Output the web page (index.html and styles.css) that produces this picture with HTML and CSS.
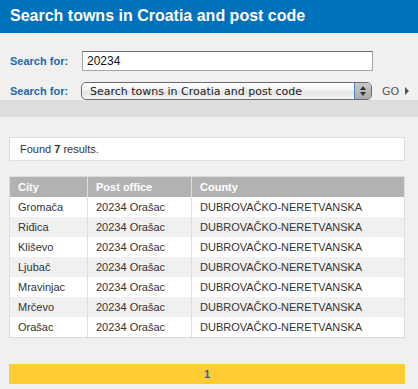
FILE: index.html
```html
<!DOCTYPE html>
<html lang="en">
<head>
  <meta charset="UTF-8">
  <title>Search towns in Croatia and post code</title>
  <link rel="stylesheet" href="styles.css">
</head>
<body>
  <h1 class="naslov">Search towns in Croatia and post code</h1>

  <form class="trazilica" onsubmit="return false">
    <div class="red">
      <label class="oznaka" for="upit">Search for:</label>
      <input id="upit" class="polje" type="text" value="20234">
    </div>
    <div class="red">
      <label class="oznaka" for="vrsta">Search for:</label>
      <div class="izbornik">
        <select id="vrsta" class="odabir">
          <option>Search towns in Croatia and post code</option>
        </select>
        <span class="strelice"><i class="gore"></i><i class="dolje"></i></span>
      </div>
      <a class="kreni" href="#">GO <span class="trokut"></span></a>
    </div>
  </form>
  <div class="traka"></div>

  <div class="sadrzaj">
    <div class="pronadeno">Found <b>7</b> results.</div>

    <table class="rezultati">
      <tr>
        <th class="stupacGrad">City</th>
        <th class="stupacPosta">Post office</th>
        <th>County</th>
      </tr>
      <tr><td>Gromača</td><td>20234 Orašac</td><td>DUBROVAČKO-NERETVANSKA</td></tr>
      <tr><td>Riđica</td><td>20234 Orašac</td><td>DUBROVAČKO-NERETVANSKA</td></tr>
      <tr><td>Kliševo</td><td>20234 Orašac</td><td>DUBROVAČKO-NERETVANSKA</td></tr>
      <tr><td>Ljubač</td><td>20234 Orašac</td><td>DUBROVAČKO-NERETVANSKA</td></tr>
      <tr><td>Mravinjac</td><td>20234 Orašac</td><td>DUBROVAČKO-NERETVANSKA</td></tr>
      <tr><td>Mrčevo</td><td>20234 Orašac</td><td>DUBROVAČKO-NERETVANSKA</td></tr>
      <tr><td>Orašac</td><td>20234 Orašac</td><td>DUBROVAČKO-NERETVANSKA</td></tr>
    </table>

    <div class="stranice"><a href="#">1</a></div>
  </div>
</body>
</html>
```

FILE: styles.css
```css
body {
  margin: 0;
  padding: 0;
  background-color: #f0f0f0;
  color: #333333;
  font-family: "Liberation Sans", Arial, Helvetica, sans-serif;
  font-size: 12px;
}

.naslov {
  margin: 0;
  height: 33px;
  line-height: 32px;
  padding-left: 10px;
  background-color: #0072bc;
  color: #ffffff;
  font-size: 16px;
  font-weight: bold;
}

.trazilica {
  padding: 18px 0 0 10px;
  height: 49px;
}

.red {
  display: flex;
  align-items: center;
  height: 20px;
}
.red + .red {
  margin-top: 11px;
  height: 18px;
}

.oznaka {
  width: 71px;
  color: #1c69a8;
  font-size: 11px;
  font-weight: bold;
}

.polje {
  box-sizing: border-box;
  width: 291px;
  height: 20px;
  margin: 0 0 0 1px;
  padding: 0 4px;
  border: 1px solid #a5a5a5;
  border-top-color: #6f6f6f;
  background-color: #ffffff;
  color: #111111;
  font-family: "Liberation Sans", Arial, sans-serif;
  font-size: 12px;
}

.izbornik {
  position: relative;
  width: 291px;
  height: 18px;
}

.odabir {
  appearance: none;
  -webkit-appearance: none;
  box-sizing: border-box;
  width: 291px;
  height: 18px;
  margin: 0;
  padding: 0 0 0 8px;
  border: 1px solid #6c6c70;
  border-radius: 5px;
  background: linear-gradient(#ffffff, #f3f3f3 45%, #e2e2e2 55%, #f7f7f7);
  color: #1a1a1a;
  font-family: "DejaVu Sans", "Liberation Sans", sans-serif;
  font-size: 11px;
}

.strelice {
  position: absolute;
  top: 1px;
  right: 1px;
  width: 16px;
  height: 16px;
  border-left: 1px solid #4c84c4;
  border-radius: 0 4px 4px 0;
  background: linear-gradient(#c9c9c9, #a9a9a9);
}
.gore, .dolje {
  position: absolute;
  left: 5px;
  width: 0;
  height: 0;
  border-left: 3px solid transparent;
  border-right: 3px solid transparent;
}
.gore {
  top: 3px;
  border-bottom: 4px solid #333333;
}
.dolje {
  top: 9px;
  border-top: 4px solid #333333;
}

.kreni {
  margin-left: 10px;
  color: #555555;
  font-family: "DejaVu Sans", sans-serif;
  font-size: 11px;
  text-decoration: none;
}
.trokut {
  display: inline-block;
  width: 0;
  height: 0;
  margin-left: 2px;
  border-top: 4px solid transparent;
  border-bottom: 4px solid transparent;
  border-left: 4px solid #555555;
}

.traka {
  height: 17px;
  background-color: #dddddd;
}

.sadrzaj {
  width: 396px;
  margin-left: 9px;
  padding-top: 20px;
}

.pronadeno {
  height: 22px;
  line-height: 22px;
  padding-left: 10px;
  border: 1px solid #dedede;
  background-color: #ffffff;
  font-size: 11px;
}

.rezultati {
  width: 100%;
  margin-top: 15px;
  border-collapse: collapse;
  border: 1px solid #dddddd;
  background-color: #ffffff;
  font-size: 11px;
}
.rezultati th {
  height: 20px;
  padding: 0 0 0 8px;
  background-color: #b2b2b2;
  color: #ffffff;
  text-align: left;
  font-weight: bold;
  border-left: 1px solid #dddddd;
}
.rezultati td {
  height: 20px;
  padding: 0 0 0 8px;
  border-left: 1px solid #dddddd;
}
.rezultati tr:nth-child(odd) td {
  background-color: #f0f0f0;
}
.stupacGrad {
  width: 69px;
}
.stupacPosta {
  width: 95px;
}

.stranice {
  margin-top: 26px;
  height: 20px;
  line-height: 20px;
  background-color: #ffcc33;
  text-align: center;
}
.stranice a {
  color: #1c69a8;
  font-size: 11px;
  font-weight: bold;
  text-decoration: none;
}
```
